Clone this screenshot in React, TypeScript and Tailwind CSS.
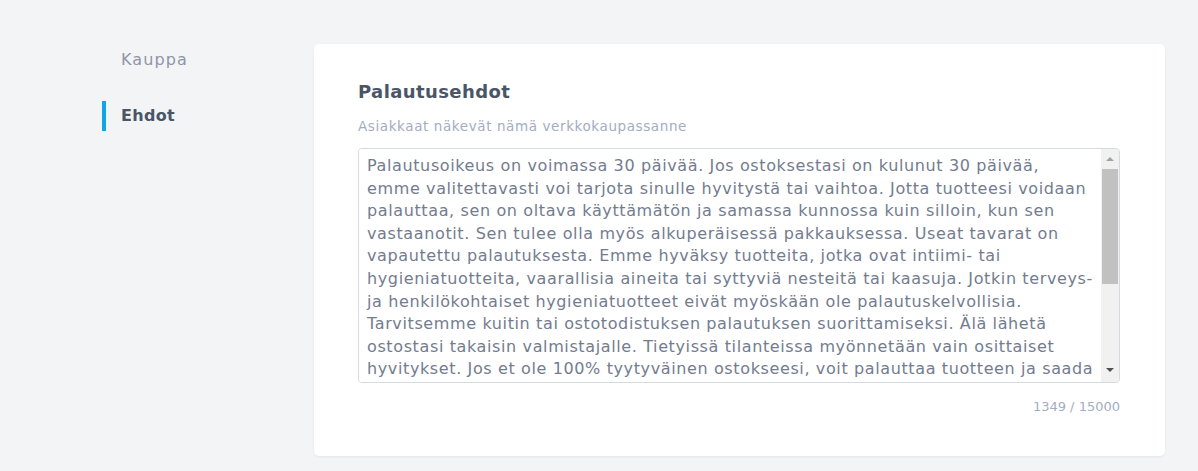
import React from "react";

const lines = [
  "Palautusoikeus on voimassa 30 päivää. Jos ostoksestasi on kulunut 30 päivää,",
  "emme valitettavasti voi tarjota sinulle hyvitystä tai vaihtoa. Jotta tuotteesi voidaan",
  "palauttaa, sen on oltava käyttämätön ja samassa kunnossa kuin silloin, kun sen",
  "vastaanotit. Sen tulee olla myös alkuperäisessä pakkauksessa. Useat tavarat on",
  "vapautettu palautuksesta. Emme hyväksy tuotteita, jotka ovat intiimi- tai",
  "hygieniatuotteita, vaarallisia aineita tai syttyviä nesteitä tai kaasuja. Jotkin terveys-",
  "ja henkilökohtaiset hygieniatuotteet eivät myöskään ole palautuskelvollisia.",
  "Tarvitsemme kuitin tai ostotodistuksen palautuksen suorittamiseksi. Älä lähetä",
  "ostostasi takaisin valmistajalle. Tietyissä tilanteissa myönnetään vain osittaiset",
  "hyvitykset. Jos et ole 100% tyytyväinen ostokseesi, voit palauttaa tuotteen ja saada",
  "täyden hyvityksen 30 päivän kuluessa. Palautuskulut maksaa asiakas, ellei tuote ole",
  "viallinen tai väärä. Hyvitys maksetaan samalla maksutavalla, jolla ostos tehtiin.",
];

export default function App() {
  return (
    <div className="min-h-[471px] w-full bg-[#f3f4f6] flex font-['DejaVu_Sans',sans-serif]">
      <nav className="w-[314px] shrink-0 pl-[102px] pt-[45px] flex flex-col gap-[26px]">
        <div className="h-[30px] flex items-center pl-[19px] text-[16px] tracking-[1.1px] text-[#8e96a8]">
          Kauppa
        </div>
        <div className="h-[30px] flex items-center border-l-[4px] border-[#0ea5e9] pl-[15px] text-[16px] tracking-[0.3px] font-bold text-[#4a5568]">
          Ehdot
        </div>
      </nav>
      <main className="pt-[44px]">
        <div className="w-[851px] h-[412px] bg-white rounded-[5px] shadow-[0_1px_3px_rgba(0,0,0,0.06)] pl-[44px] pr-[45px] pt-[36px] flex flex-col">
          <h2 className="text-[18px] leading-[24px] font-semibold tracking-[0.4px] text-[#4a5568]">
            Palautusehdot
          </h2>
          <p className="mt-[13px] text-[13.5px] leading-[18px] tracking-[0.6px] text-[#a3adc2]">
            Asiakkaat näkevät nämä verkkokaupassanne
          </p>
          <div className="mt-[13px] h-[235px] flex border border-[#d5d9e0] rounded-[4px] overflow-hidden">
            <textarea
              readOnly
              wrap="off"
              value={lines.join("\n")}
              className="flex-1 resize-none overflow-hidden whitespace-pre pl-[8px] pt-[6px] text-[16px] leading-[22.6px] tracking-[0.62px] text-[#737c8f] outline-none bg-white font-['DejaVu_Sans',sans-serif]"
            />
            <div className="w-[18px] shrink-0 bg-[#f1f1f1] flex flex-col items-center pr-[1px]">
              <div className="h-[20px] flex items-center justify-center">
                <div className="w-0 h-0 border-l-[4px] border-r-[4px] border-b-[4px] border-l-transparent border-r-transparent border-b-[#a3a3a3]" />
              </div>
              <div className="w-[16px] h-[115px] bg-[#c1c1c1]" />
              <div className="flex-1" />
              <div className="h-[24px] flex items-center justify-center">
                <div className="w-0 h-0 border-l-[4px] border-r-[4px] border-t-[4px] border-l-transparent border-r-transparent border-t-[#505050]" />
              </div>
            </div>
          </div>
          <div className="mt-[15px] text-right text-[13px] leading-[18px] text-[#a3adc2]">
            1349 / 15000
          </div>
        </div>
      </main>
    </div>
  );
}
